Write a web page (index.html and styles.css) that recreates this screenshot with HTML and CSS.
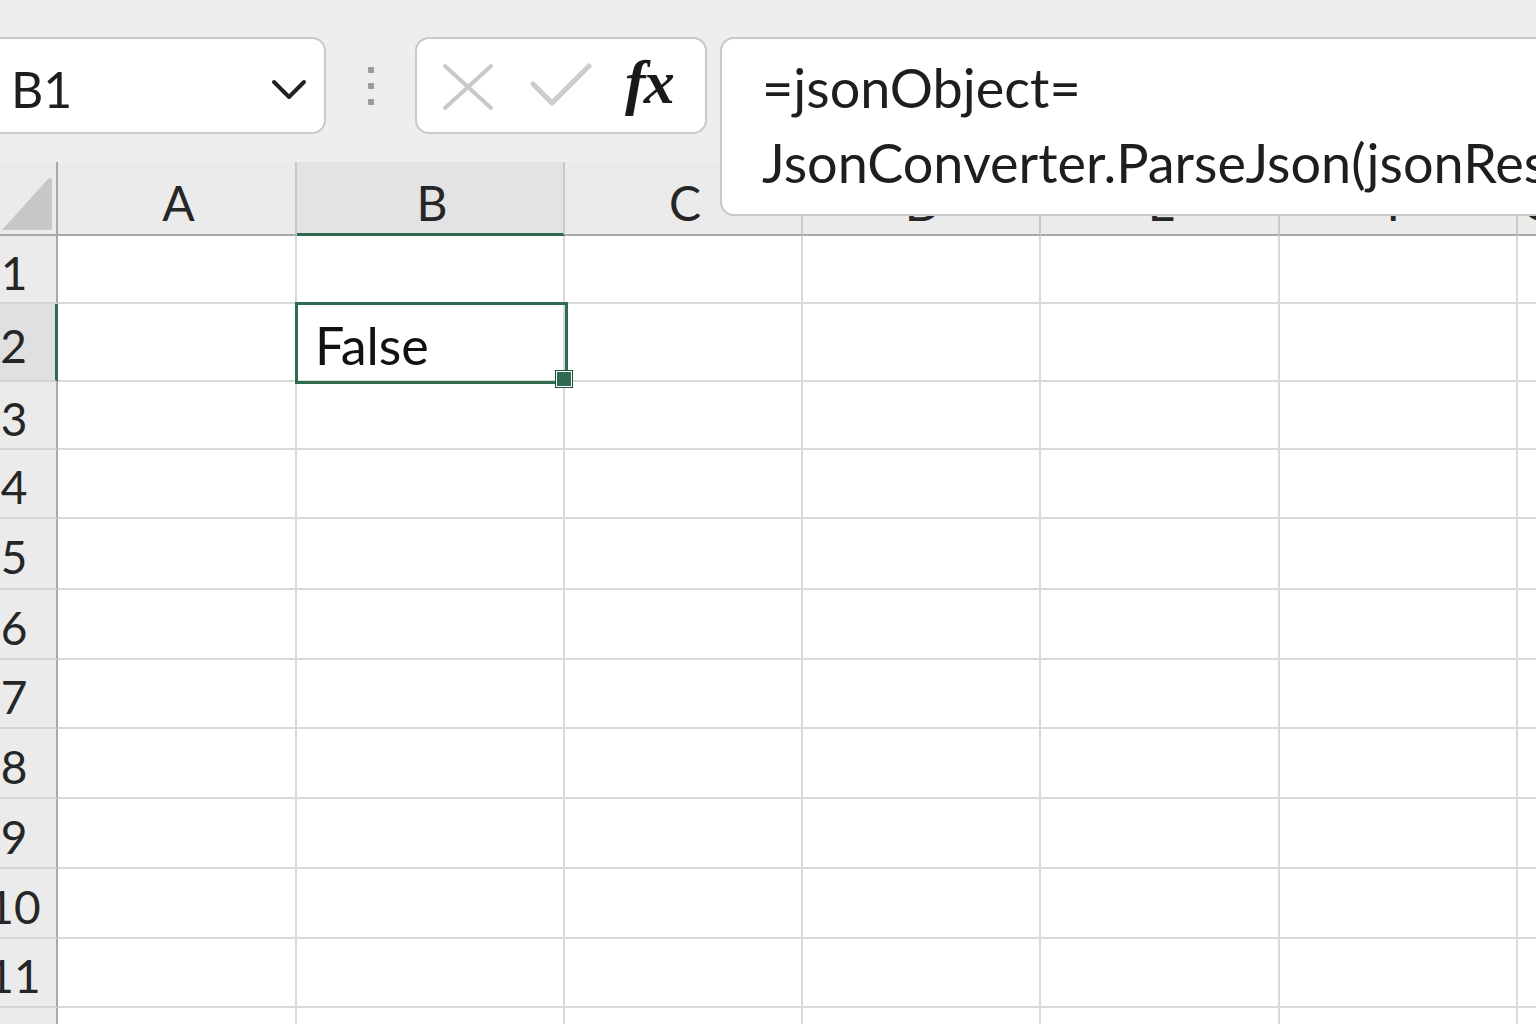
FILE: index.html
```html
<!DOCTYPE html>
<html>
<head>
<meta charset="utf-8">
<link rel="stylesheet" href="styles.css">
</head>
<body>
<div class="toolbar">
  <div class="namebox">
    <span class="name">B1</span>
    <svg class="chev" width="36" height="22" viewBox="0 0 36 22"><path d="M3 3 L18 18 L33 3" fill="none" stroke="#222" stroke-width="4" stroke-linecap="round" stroke-linejoin="round"/></svg>
  </div>
  <div class="dots"><i></i><i></i><i></i></div>
  <div class="fxgroup">
    <svg class="ico-x" width="52" height="48" viewBox="0 0 52 48"><path d="M3 3 L49 45 M49 3 L3 45" stroke="#c9c9c9" stroke-width="4" stroke-linecap="round"/></svg>
    <svg class="ico-check" width="62" height="44" viewBox="0 0 62 44"><path d="M3 21 L22 40 L59 3" fill="none" stroke="#cbcbcb" stroke-width="5" stroke-linecap="round" stroke-linejoin="round"/></svg>
    <span class="fx">fx</span>
  </div>
  <div class="formula">=jsonObject=<br>JsonConverter.ParseJson(jsonResponse)</div>
</div>

<div class="sheet">
  <div class="corner"><svg width="58" height="74" viewBox="0 0 58 74"><path d="M2 68 L48 17 Q52 14 52 19 L52 66 Q52 68 50 68 Z" fill="#c7c7c7"/></svg></div>
  <div class="ch">A</div><div class="ch sel">B</div><div class="ch">C</div><div class="ch">D</div><div class="ch">E</div><div class="ch">F</div><div class="ch">G</div>

  <div class="rh">1</div><div class="c"></div><div class="c"></div><div class="c"></div><div class="c"></div><div class="c"></div><div class="c"></div><div class="c"></div>
  <div class="rh sel">2</div><div class="c"></div><div class="c val">False</div><div class="c"></div><div class="c"></div><div class="c"></div><div class="c"></div><div class="c"></div>
  <div class="rh">3</div><div class="c"></div><div class="c"></div><div class="c"></div><div class="c"></div><div class="c"></div><div class="c"></div><div class="c"></div>
  <div class="rh">4</div><div class="c"></div><div class="c"></div><div class="c"></div><div class="c"></div><div class="c"></div><div class="c"></div><div class="c"></div>
  <div class="rh">5</div><div class="c"></div><div class="c"></div><div class="c"></div><div class="c"></div><div class="c"></div><div class="c"></div><div class="c"></div>
  <div class="rh">6</div><div class="c"></div><div class="c"></div><div class="c"></div><div class="c"></div><div class="c"></div><div class="c"></div><div class="c"></div>
  <div class="rh">7</div><div class="c"></div><div class="c"></div><div class="c"></div><div class="c"></div><div class="c"></div><div class="c"></div><div class="c"></div>
  <div class="rh">8</div><div class="c"></div><div class="c"></div><div class="c"></div><div class="c"></div><div class="c"></div><div class="c"></div><div class="c"></div>
  <div class="rh">9</div><div class="c"></div><div class="c"></div><div class="c"></div><div class="c"></div><div class="c"></div><div class="c"></div><div class="c"></div>
  <div class="rh">10</div><div class="c"></div><div class="c"></div><div class="c"></div><div class="c"></div><div class="c"></div><div class="c"></div><div class="c"></div>
  <div class="rh">11</div><div class="c"></div><div class="c"></div><div class="c"></div><div class="c"></div><div class="c"></div><div class="c"></div><div class="c"></div>
  <div class="rh">12</div><div class="c"></div><div class="c"></div><div class="c"></div><div class="c"></div><div class="c"></div><div class="c"></div><div class="c"></div>

  <div class="selection"><span class="handle"></span></div>
</div>
</body>
</html>
```

FILE: styles.css
```css
html, body {
  margin: 0;
  padding: 0;
  width: 1536px;
  height: 1024px;
  overflow: hidden;
  background: #eeeeee;
  font-family: Lato, "Open Sans", "Liberation Sans", sans-serif;
  color: #1f1f1f;
}

.toolbar {
  height: 162px;
  box-sizing: border-box;
  padding-top: 37px;
  display: flex;
  align-items: flex-start;
  position: relative;
  z-index: 3;
}
.toolbar > * { flex: none; }

.namebox {
  margin-left: -20px;
  width: 346px;
  height: 97px;
  box-sizing: border-box;
  border: 2px solid #c9c9c9;
  border-radius: 14px;
  background: #fff;
  display: flex;
  align-items: center;
  padding-left: 29px;
  padding-right: 17px;
}
.name {
  font-size: 50px;
  flex: 1;
  padding-top: 6px;
  color: #1e1e1e;
}
.chev { display: block; margin-top: 8px; }

.dots {
  width: 89px;
  height: 97px;
  display: flex;
  flex-direction: column;
  align-items: center;
  justify-content: center;
  gap: 10px;
}
.dots i {
  display: block;
  width: 6px;
  height: 6px;
  border-radius: 1px;
  background: #9c9c9c;
}

.fxgroup {
  width: 292px;
  height: 97px;
  box-sizing: border-box;
  border: 2px solid #c9c9c9;
  border-radius: 14px;
  background: #fff;
  display: flex;
  align-items: center;
  padding-left: 25px;
}
.ico-x { display: block; margin-top: 2px; flex: none; }
.ico-check { display: block; margin-left: 36px; margin-top: -2px; flex: none; }
.fx {
  font-family: "Liberation Serif", "DejaVu Serif", serif;
  font-style: italic;
  font-weight: bold;
  font-size: 62px;
  margin-left: 33px;
  margin-top: -6px;
  color: #1a1a1a;
  letter-spacing: -2px;
}

.formula {
  margin-left: 13px;
  width: 816px;
  height: 179px;
  box-sizing: border-box;
  border: 2px solid #c9c9c9;
  border-right: none;
  border-radius: 14px 0 0 14px;
  background: #fff;
  padding: 11px 0 0 40px;
  font-size: 54px;
  line-height: 75px;
  white-space: nowrap;
  overflow: hidden;
  color: #1e1e1e;
}

.sheet {
  position: relative;
  display: grid;
  grid-template-columns: 58px 239px 268px 238px 238px 239px 238px 1fr;
  grid-template-rows: 74px 68px 78px 68px 69px 71px 70px 69px 70px 70px 70px 69px 60px;
  background: #fff;
}

.corner {
  background: #ebebeb;
  border-right: 2px solid #a9a9a9;
  border-bottom: 2px solid #a9a9a9;
  box-sizing: border-box;
}
.corner svg { display: block; }

.ch {
  background: #ebebeb;
  box-sizing: border-box;
  border-right: 2px solid #cacaca;
  border-bottom: 2px solid #a9a9a9;
  display: flex;
  align-items: center;
  justify-content: center;
  padding-top: 8px;
  padding-left: 4px;
  font-size: 48px;
  color: #262626;
}
.ch.sel {
  background: #e3e3e3;
  border-bottom: 3px solid #2e6b4f;
  padding-top: 9px;
}

.rh {
  background: #ebebeb;
  box-sizing: border-box;
  border-right: 2px solid #a9a9a9;
  border-bottom: 2px solid #d3d3d3;
  display: flex;
  align-items: center;
  justify-content: center;
  padding-top: 6px;
  margin-left: -30px;
  padding-left: 2px;
  font-size: 46px;
  color: #262626;
}
.rh.sel {
  background: #e0e0e0;
  border-right: 3px solid #2e6b4f;
}

.c {
  box-sizing: border-box;
  border-right: 2px solid #d9d9d9;
  border-bottom: 2px solid #d9d9d9;
}
.c.val {
  display: flex;
  align-items: center;
  padding-left: 18px;
  padding-top: 6px;
  font-size: 52px;
  color: #111;
}

.selection {
  position: absolute;
  left: 295px;
  top: 140px;
  width: 273px;
  height: 82px;
  box-sizing: border-box;
  border: 3px solid #2e6b4f;
  pointer-events: none;
}
.handle {
  position: absolute;
  right: -7px;
  bottom: -6px;
  width: 14px;
  height: 14px;
  background: #2f6b50;
  border: 1px solid #fff;
  outline: 1px solid #1f4f39;
}
```
